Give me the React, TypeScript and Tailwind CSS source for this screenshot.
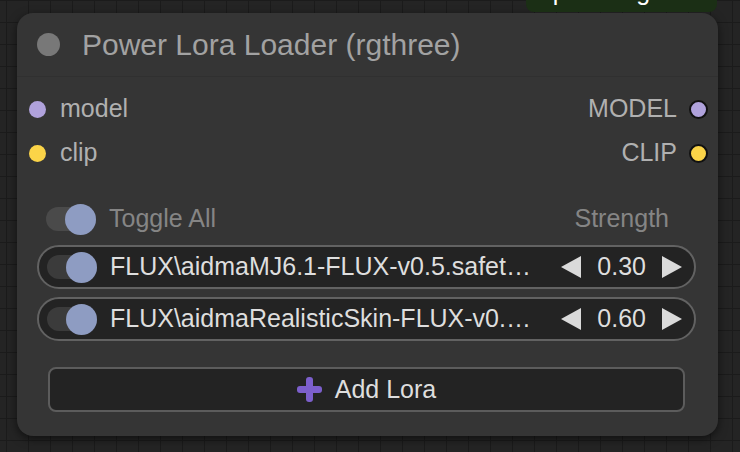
const FONT = "font-['Liberation_Sans',Arial,sans-serif]";

type Slot = { name: string; color: string };

const INPUTS: Slot[] = [
  { name: "model", color: "bg-[#b0a2dc]" },
  { name: "clip", color: "bg-[#fbd448]" },
];

const OUTPUTS: Slot[] = [
  { name: "MODEL", color: "bg-[#b0a2dc]" },
  { name: "CLIP", color: "bg-[#fbd448]" },
];

const LORAS = [
  { name: "FLUX\\aidmaMJ6.1-FLUX-v0.5.safet\u2026", strength: "0.30" },
  { name: "FLUX\\aidmaRealisticSkin-FLUX-v0.\u2026", strength: "0.60" },
];

function Toggle({ track }: { track: string }) {
  return (
    <div className={`w-[50px] h-[24px] rounded-full flex items-center justify-end shrink-0 ${track}`}>
      <div className="w-[31px] h-[31px] rounded-full bg-[#8e9cc2] shrink-0" />
    </div>
  );
}

function Arrow({ dir }: { dir: "left" | "right" }) {
  return (
    <svg width="20" height="22" viewBox="0 0 20 22" className="shrink-0">
      {dir === "left" ? (
        <polygon points="20,0 20,22 0,11" fill="#dadada" />
      ) : (
        <polygon points="0,0 0,22 20,11" fill="#dadada" />
      )}
    </svg>
  );
}

function LoraRow({ name, strength }: { name: string; strength: string }) {
  return (
    <div className="h-[44px] rounded-full border-2 border-[#626262] bg-[#232323] flex items-center pl-[8px] pr-[12px]">
      <Toggle track="bg-[#3b3b3b]" />
      <span className="ml-[13px] flex-1 min-w-0 whitespace-nowrap overflow-hidden text-[25px] text-[#dedede]">
        {name}
      </span>
      <Arrow dir="left" />
      <span className="mx-[16px] text-[25px] text-[#dedede]">{strength}</span>
      <Arrow dir="right" />
    </div>
  );
}

export default function App() {
  return (
    <div
      className={`relative w-[740px] h-[452px] overflow-hidden bg-[#242424] bg-[linear-gradient(#1b1b1b_1px,transparent_1px),linear-gradient(90deg,#1b1b1b_1px,transparent_1px)] bg-[size:22px_22px] bg-[position:6px_0px] pl-[17px] pt-[13px] ${FONT}`}
    >
      {/* neighbouring node peeking in at the top */}
      <div className="absolute left-[526px] top-0 w-[191px] h-[12px] rounded-b-[8px] bg-[#1b2f15] overflow-hidden">
        <span className="absolute left-[6px] top-[-21px] text-[25px] leading-[25px] text-white whitespace-nowrap">
          Input Image
        </span>
      </div>

      <div className="w-[701px] h-[423px] rounded-[16px] bg-[#353535] shadow-[0_3px_10px_rgba(0,0,0,0.55)] flex flex-col">
        {/* title */}
        <div className="h-[64px] flex items-center pl-[20px] border-b border-[#303030]">
          <div className="w-[23px] h-[23px] rounded-full bg-[#787878]" />
          <span className="ml-[22px] text-[30px] text-[#a2a2a2]">Power Lora Loader (rgthree)</span>
        </div>

        {/* slots */}
        <div className="pt-[10px] flex flex-col">
          {INPUTS.map((inp, i) => (
            <div key={inp.name} className="h-[44px] flex items-center justify-between pl-[12px] pr-[10px]">
              <div className="flex items-center">
                <div className={`w-[17px] h-[17px] rounded-full ${inp.color}`} />
                <span className="ml-[14px] text-[25px] text-[#b0b0b0]">{inp.name}</span>
              </div>
              <div className="flex items-center">
                <span className="text-[25px] text-[#b0b0b0]">{OUTPUTS[i].name}</span>
                <div className={`ml-[12px] w-[19px] h-[19px] rounded-full border-2 border-[#111] ${OUTPUTS[i].color}`} />
              </div>
            </div>
          ))}
        </div>

        {/* widgets */}
        <div className="mt-[22px] pl-[20px] pr-[22px] flex flex-col">
          <div className="h-[44px] flex items-center pl-[9px] pr-[27px]">
            <Toggle track="bg-[#4a4a4a]" />
            <span className="ml-[13px] flex-1 text-[25px] text-[#858585]">Toggle All</span>
            <span className="text-[25px] text-[#858585]">Strength</span>
          </div>
          <div className="mt-[4px] flex flex-col gap-[8px]">
            {LORAS.map((l) => (
              <LoraRow key={l.name} name={l.name} strength={l.strength} />
            ))}
          </div>
          <div className="mt-[26px] mx-[11px] h-[45px] rounded-[8px] border-2 border-[#5c5c5c] bg-[#232323] flex items-center justify-center">
            <svg width="25" height="25" viewBox="0 0 25 25">
              <rect x="9" y="0" width="7" height="25" rx="3" fill="#7c5fcc" />
              <rect x="0" y="9" width="25" height="7" rx="3" fill="#7c5fcc" />
            </svg>
            <span className="ml-[13px] text-[25px] text-[#dedede]">Add Lora</span>
          </div>
        </div>
      </div>
    </div>
  );
}
